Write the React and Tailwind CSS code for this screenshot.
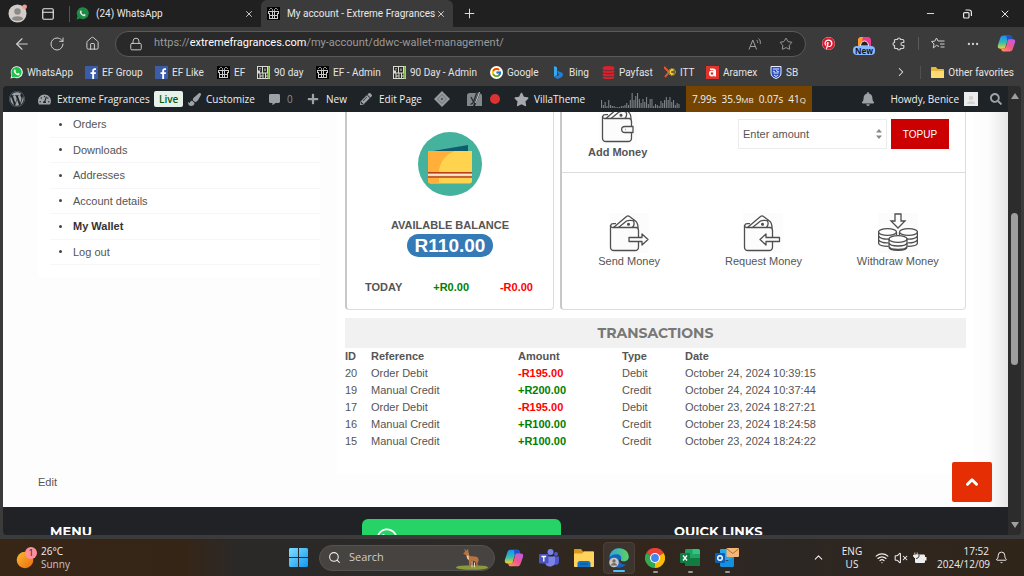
import {
  ArrowLeft, RotateCw, Home, Lock, Star, Plus, X, Minus, Ellipsis, ChevronRight, ChevronUp,
  Search, Wifi, VolumeX, Bell, PanelTop,
} from 'lucide-react'
import {
  FaWordpress, FaTachometerAlt, FaPaintBrush, FaCommentAlt, FaPencilAlt, FaStar, FaBell, FaSearch,
  FaWhatsapp, FaPinterest, FaPlus,
} from 'react-icons/fa'
import { FcGoogle } from 'react-icons/fc'
import clsx from 'clsx'

// ── Data ────────────────────────────────────────────────────────────────────
const FAVORITES = [
  { label: 'WhatsApp',       icon: WhatsAppIcon, width: 'w-[75px]' },
  { label: 'EF Group',       icon: FacebookIcon, width: 'w-[70px]' },
  { label: 'EF Like',        icon: FacebookIcon, width: 'w-[62px]' },
  { label: 'EF',             icon: GiftIcon,     width: 'w-[40px]' },
  { label: '90 day',         icon: NinetyIcon,   width: 'w-[59px]' },
  { label: 'EF - Admin',     icon: GiftIcon,     width: 'w-[77px]' },
  { label: '90 Day - Admin', icon: NinetyIcon,   width: 'w-[97px]' },
  { label: 'Google',         icon: GoogleIcon,   width: 'w-[62px]' },
  { label: 'Bing',           icon: BingIcon,     width: 'w-[50px]' },
  { label: 'Payfast',        icon: PayfastIcon,  width: 'w-[62px]' },
  { label: 'ITT',            icon: IttIcon,      width: 'w-[42px]' },
  { label: 'Aramex',         icon: AramexIcon,   width: 'w-[64px]' },
  { label: 'SB',             icon: ShieldIcon,   width: 'w-[40px]' },
]

const ACCOUNT_MENU = ['Orders', 'Downloads', 'Addresses', 'Account details', 'My Wallet', 'Log out']

const TRANSACTIONS = [
  { id: 20, reference: 'Order Debit',   amount: '-R195.00', type: 'Debit',  date: 'October 24, 2024 10:39:15' },
  { id: 19, reference: 'Manual Credit', amount: '+R200.00', type: 'Credit', date: 'October 24, 2024 10:37:44' },
  { id: 17, reference: 'Order Debit',   amount: '-R195.00', type: 'Debit',  date: 'October 23, 2024 18:27:21' },
  { id: 16, reference: 'Manual Credit', amount: '+R100.00', type: 'Credit', date: 'October 23, 2024 18:24:58' },
  { id: 15, reference: 'Manual Credit', amount: '+R100.00', type: 'Credit', date: 'October 23, 2024 18:24:22' },
]

const LOAD_BARS = [8, 3, 6, 2, 8, 3, 2, 2, 1, 1, 1, 2, 2, 3, 5, 3, 8, 15, 8, 12, 15, 9, 5, 9, 6, 11, 4, 9, 9, 2, 4, 3, 2, 7, 5, 8, 11, 8, 11, 6, 8, 3, 5, 4]

// ── Small brand icons ───────────────────────────────────────────────────────
function WhatsAppIcon() {
  return (
    <svg width="13" height="13" viewBox="0 0 26 26" className="shrink-0">
      <path d="M1 25l2-7A12 12 0 1 1 8 23z" fill="#fff" />
      <path d="M3 23l1.400-5A10.300 10.300 0 1 1 8.500 21.600z" fill="#1fc14b" />
      <path d="M8.500 7.500c1-1 2-.8 2.400.3l.8 2c.2.700-1 1.500-.7 2 1 1.700 2 2.700 3.700 3.400.7.300 1.200-1.200 2-1l2 1c1 .5.5 2-.4 2.800-1 .8-2.400.8-3.600.4-3.400-1.100-6-3.500-7-6.700-.4-1.500-.1-3.200.8-4.200z" fill="#fff" />
    </svg>
  )
}

// dimmed version used in the inactive tab
function WhatsAppTabIcon() {
  return (
    <svg width="13" height="13" viewBox="0 0 26 26" className="shrink-0">
      <path d="M1 25l2-7A12 12 0 1 1 8 23z" fill="#1d8a45" />
      <path d="M8.500 7.500c1-1 2-.8 2.400.3l.8 2c.2.700-1 1.500-.7 2 1 1.700 2 2.700 3.700 3.400.7.300 1.200-1.200 2-1l2 1c1 .5.5 2-.4 2.800-1 .8-2.400.8-3.600.4-3.400-1.100-6-3.500-7-6.700-.4-1.500-.1-3.200.8-4.200z" fill="#e5e5e5" />
    </svg>
  )
}

function FacebookIcon() {
  return (
    <svg width="13" height="13" viewBox="0 0 13 13" className="shrink-0">
      <rect width="13" height="13" fill="#3b5ca8" />
      <path d="M7.200 13V8H5.500V6.200h1.700V4.800C7.200 3 8.200 2.200 9.800 2.200h1.200v1.700h-.9c-.8 0-1 .4-1 1v1.300h1.900L10.800 8H9.100v5z" fill="#fff" />
    </svg>
  )
}

function GiftIcon() {
  return (
    <svg width="13" height="13" viewBox="0 0 13 13" className="shrink-0" shapeRendering="crispEdges">
      <rect width="13" height="13" fill="#050505" />
      <path d="M1 4h11v1H1zM2 8h9v1H2zM2 11h9v1H2zM1 4h1v3H1zM11 4h1v3h-1zM2 6h1v6H2zM10 6h1v6h-1zM5 4h1v8H5zM7 4h1v8H7z" fill="#c9c9c9" />
      <path d="M3 1h2v1H3zM8 1h2v1H8zM5 2h1v2H5zM7 2h1v2H7zM2 2h1v1H2zM10 2h1v1h-1z" fill="#8f8f8f" />
    </svg>
  )
}

function NinetyIcon() {
  return (
    <svg width="13" height="13" viewBox="0 0 26 26" className="shrink-0">
      <rect width="26" height="26" fill="#d9dad2" />
      <path d="M2 2h8v11H6v-3h1V9H2zM12 2h8v11h-8zM2 15h3v9H2zM7 15h4v4H7zM7 21h4v3H7zM13 15h3v9h-3zM18 15h3v4h-3zM18 21h3v3h-3z" fill="#2a2a28" />
      <path d="M5 4h2v3H5zM15 5h2v5h-2z" fill="#ddd" />
      <rect x="22" y="1" width="3" height="24" fill="#7cb342" />
    </svg>
  )
}

function GoogleIcon() {
  return (
    <span className="flex size-[13px] shrink-0 items-center justify-center rounded-full bg-white">
      <FcGoogle size={11} />
    </span>
  )
}

function BingIcon() {
  return (
    <svg width="13" height="13" viewBox="0 0 13 13" className="shrink-0">
      <path d="M2 0l3 1.200v8L2 11z" fill="#35a8f0" />
      <path d="M5 4.500l5.500 2.600c1 1.400.3 3.400-1 4.100L5.500 13 2 11l3-1 2.500-1.200-1-.6z" fill="#1f7fe0" />
    </svg>
  )
}

function PayfastIcon() {
  return (
    <svg width="13" height="13" viewBox="0 0 13 13" className="shrink-0" fill="none" stroke="#e01f2d" strokeWidth="2">
      <ellipse cx="6.500" cy="2.200" rx="5" ry="1.200" fill="#e01f2d" />
      <path d="M1 5c1.500 1.700 9.500 1.700 11 0M1 8c1.500 1.700 9.500 1.700 11 0M1 11c1.500 1.500 9.500 1.500 11 0" />
    </svg>
  )
}

function IttIcon() {
  return (
    <svg width="12" height="12" viewBox="0 0 12 12" className="shrink-0" fill="none">
      <path d="M0 1l5 5-4 5" stroke="#e8592b" strokeWidth="2" />
      <circle cx="8" cy="6" r="3.500" fill="#6b6330" stroke="#b39c4e" strokeDasharray="1.500 1" />
      <path d="M9.500 4.500a2 2 0 1 0 0 3" stroke="#ffcf2e" strokeWidth="1.500" />
    </svg>
  )
}

function AramexIcon() {
  return (
    <svg width="13" height="13" viewBox="0 0 13 13" className="shrink-0">
      <rect width="13" height="13" fill="#e0332c" />
      <circle cx="6" cy="7.500" r="2.200" fill="none" stroke="#fff" strokeWidth="1.700" />
      <path d="M4 2.500h3c2 0 3 1 3 2.500v5.500H8.300V5.500L7 4.100H4z" fill="#fff" />
    </svg>
  )
}

function ShieldIcon() {
  return (
    <svg width="12" height="13" viewBox="0 0 12 13" className="shrink-0">
      <path d="M1 .5h10V7c0 3-2 4.500-5 5.500-3-1-5-2.500-5-5.500z" fill="#2a4fc0" stroke="#e6ebff" />
      <path d="M3 3h6M3 5l2 1M6 4.500l3 1.500M3.500 7h5M4 9l2 1.500L8 9" stroke="#fff" strokeWidth=".9" fill="none" />
    </svg>
  )
}

function CopilotIcon({ className }) {
  return (
    <svg viewBox="0 0 24 24" className={className}>
      <defs>
        <linearGradient id="cp-a" x1="0" y1="0" x2="0" y2="1">
          <stop offset="0" stopColor="#1e8cf0" /><stop offset=".55" stopColor="#35bdb0" /><stop offset="1" stopColor="#f5d327" />
        </linearGradient>
        <linearGradient id="cp-b" x1="1" y1="0" x2="0" y2="1">
          <stop offset="0" stopColor="#b55cf5" /><stop offset=".5" stopColor="#f0588c" /><stop offset="1" stopColor="#ff9a4a" />
        </linearGradient>
      </defs>
      <path d="M8 2h8c1.500 0 2.300 1 2.700 2.300L19.500 7h-4c-1.500 0-2.300 1-2.700 2.300L10.500 17c-.5 1-1 1.500-2.500 1.500H4C1 18.500.5 16 1.300 13.500l3-9C5 3 6 2 8 2z" fill="url(#cp-a)" />
      <path d="M12 2h4c1.500 0 2.300 1 2.700 2.300L19.500 7h-4c-1.500 0-2.300 1-2.700 2.300z" fill="#1d52cf" />
      <path d="M16 22H8c-1.500 0-2.300-1-2.700-2.300L4.800 18h4c1.500 0 2.300-1 2.700-2.300L13.500 8c.5-1 1-1.500 2.500-1.500h4c3 0 3.500 2 2.700 4.500l-3 8.500C19 21 18 22 16 22z" fill="url(#cp-b)" />
    </svg>
  )
}

// ── Browser chrome ──────────────────────────────────────────────────────────
function TabBar() {
  return (
    <div className="flex h-[27px] shrink-0 items-center bg-[#202020] font-[Roboto,sans-serif] text-[10px] text-[#e8e8e8]">
      <svg viewBox="0 0 20 20" className="ml-2 size-[19px]">
        <circle cx="10" cy="10" r="9.500" fill="#cfccc9" />
        <circle cx="10" cy="8" r="3.400" fill="#8d8986" />
        <path d="M4 15.500c1-3.500 11-3.500 12 0-2.500 3-9.500 3-12 0z" fill="#8d8986" />
        <circle cx="17.500" cy="3" r="2.500" fill="#f59a94" />
      </svg>
      <PanelTop size={14} className="ml-[14px]" />
      <span className="ml-[14px] h-4 w-px bg-[#555]" />
      <a href="#whatsapp" className="ml-[6px] flex w-[178px] items-center">
        <WhatsAppTabIcon />
        <span className="ml-[7px] flex-1 whitespace-nowrap">(24) WhatsApp</span>
        <X size={10} className="shrink-0" />
      </a>
      <a href="#account" className="ml-[7px] flex h-full w-[192px] items-center rounded-t-md bg-[#3b3b3b] pr-[7px] pl-[6px]">
        <GiftIcon />
        <span className="ml-[7px] flex-1 whitespace-nowrap">My account - Extreme Fragrances</span>
        <X size={10} className="shrink-0" />
      </a>
      <button aria-label="New tab" className="ml-[9px]"><Plus size={15} strokeWidth={1.500} /></button>
      <div className="mr-[13px] ml-auto flex items-center gap-[27px]">
        <button aria-label="Minimize"><Minus size={11} /></button>
        <button aria-label="Restore">
          <svg width="9" height="10" viewBox="0 0 9 10" fill="none" stroke="currentColor" strokeWidth="1.200">
            <rect x=".6" y="3.600" width="5.400" height="5.400" rx="1" />
            <path d="M2.500 1h3.500c1.500 0 2.400 1 2.400 2.400V7" />
          </svg>
        </button>
        <button aria-label="Close"><X size={12} /></button>
      </div>
    </div>
  )
}

function Toolbar() {
  return (
    <div className="flex h-[33px] shrink-0 items-center bg-[#3b3b3b] text-[#d0d0d0]">
      <button aria-label="Back" className="ml-[13px]"><ArrowLeft size={18} strokeWidth={1.500} /></button>
      <button aria-label="Refresh" className="ml-[18px]"><RotateCw size={16} strokeWidth={1.500} /></button>
      <button aria-label="Home" className="ml-[20px]"><Home size={15} strokeWidth={1.600} /></button>
      <div className="ml-[15px] flex h-[26px] flex-1 items-center rounded-full border border-[#5a5a5a] bg-[#292929] pr-[12px] pl-[13px]">
        <Lock size={14} strokeWidth={1.600} />
        <p className="ml-[11px] flex-1 font-[Roboto,sans-serif] text-[11px] whitespace-nowrap text-[#9a9a9a]">
          https://<span className="text-white">extremefragrances.com</span>/my-account/ddwc-wallet-management/
        </p>
        <svg width="14" height="14" viewBox="0 0 14 14" fill="none" stroke="#a0a0a0">
          <path d="M1 12.500L4.800 3l3.800 9.500M2.400 9.500h4.800M8.500 3c1 .8 1.300 2 1 3M10.500 1.500c1.700 1.400 2.200 3.400 1.700 5.500" />
        </svg>
        <Star size={14} strokeWidth={1.500} className="ml-[17px] text-[#a8a8a8]" />
      </div>
      <div className="flex items-center">
        <span className="ml-[16px] rounded-full bg-white"><FaPinterest size={13} className="text-[#e0142b]" /></span>
        <span className="mt-1 ml-[19px] flex w-[20px] flex-col items-center">
          <svg width="13" height="9" viewBox="0 0 13 9">
            <path d="M0 9V2L2 0h9l2 2v7z" fill="#ee3b92" />
            <path d="M0 9V2L2 0h3L3 9z" fill="#ff9d1f" />
            <path d="M2.500 9a4 5 0 0 1 8 0z" fill="#222" stroke="#eee" />
          </svg>
          <span className="rounded bg-[#8ab8ff] px-[2px] text-[8px] leading-[9px] font-bold text-[#101820]">New</span>
        </span>
        <svg width="14" height="14" viewBox="0 0 14 14" fill="none" stroke="currentColor" strokeWidth="1.200" className="ml-[18px]">
          <path d="M3.500 2.500h2c0-2 3-2 3 0h2.300c.6 0 1 .4 1 1v2h-1.300c-2 0-2 3 0 3h1.300v2c0 .6-.4 1-1 1H8.500c0 2-3 2-3 0h-2c-.6 0-1-.4-1-1V8.500c-2 0-2-3 0-3v-2c0-.6.4-1 1-1z" />
        </svg>
        <span className="ml-[12px] h-[13px] w-px bg-[#5a5a5a]" />
        <svg width="14" height="14" viewBox="0 0 14 14" fill="none" stroke="currentColor" className="ml-[12px]">
          <path d="M8 9.500L5.500 8.300 2.300 11l.7-4-2.500-2.500 3.300-.4L5.500 1 7 4h6.500M9 7h4.500M9.500 10h4" />
        </svg>
        <Ellipsis size={14} className="ml-[21px]" />
        <CopilotIcon className="mr-[8px] ml-[17px] size-[19px]" />
      </div>
    </div>
  )
}

function FavoritesBar() {
  return (
    <nav className="flex h-[26px] shrink-0 items-center bg-[#3b3b3b] pb-[2px] pl-[10px] font-[Roboto,sans-serif] text-[10px] text-[#e4e4e4]">
      {FAVORITES.map(({ label, icon: Icon, width }) => (
        <a key={label} href="#fav" className={clsx('flex shrink-0 items-center gap-1 whitespace-nowrap', width)}>
          <Icon />
          {label}
        </a>
      ))}
      <button aria-label="More favorites" className="ml-auto"><ChevronRight size={14} strokeWidth={1.800} /></button>
      <span className="ml-[12px] h-[13px] w-px bg-[#505050]" />
      <a href="#other" className="mr-[10px] ml-[10px] flex items-center gap-1 whitespace-nowrap">
        <svg width="13" height="11" viewBox="0 0 13 11">
          <path d="M0 1c0-.6.400-1 1-1h4l1.500 2H12c.6 0 1 .4 1 1v7c0 .6-.4 1-1 1H1c-.6 0-1-.4-1-1z" fill="#e8b63c" />
          <path d="M0 4h13v6c0 .6-.4 1-1 1H1c-.6 0-1-.4-1-1z" fill="#ffdc70" />
        </svg>
        Other favorites
      </a>
    </nav>
  )
}

// ── WordPress admin bar ─────────────────────────────────────────────────────
function AdminBar() {
  return (
    <header className="flex h-[26px] shrink-0 items-center rounded-tl bg-[#1d2327] pl-[6px] text-[10px] whitespace-nowrap text-[#f0f0f1]">
      <a href="#wp" aria-label="WordPress" className="w-[29px]"><FaWordpress size={16} className="text-[#9ca2a7]" /></a>
      <a href="#site" className="flex w-[116px] items-center gap-[6px]">
        <FaTachometerAlt size={13} className="text-[#9ca2a7]" />Extreme Fragrances
      </a>
      <span className="w-[34px]">
        <span className="rounded-xs bg-[#e6f2e8] px-[5px] py-[1px] font-semibold text-[#005c12]">Live</span>
      </span>
      <a href="#customize" className="flex w-[81px] items-center gap-[5px]">
        <FaPaintBrush size={13} className="text-[#9ca2a7]" />Customize
      </a>
      <a href="#comments" className="flex w-[38px] items-center gap-[7px] text-[#8c9196]">
        <FaCommentAlt size={11} className="text-[#9ca2a7]" />0
      </a>
      <a href="#new" className="flex w-[53px] items-center gap-[7px]">
        <FaPlus size={12} className="text-[#9ca2a7]" />New
      </a>
      <a href="#edit" className="flex w-[74px] items-center gap-[7px]">
        <FaPencilAlt size={12} className="text-[#9ca2a7]" />Edit Page
      </a>
      <svg width="16" height="16" viewBox="0 0 16 16" className="shrink-0">
        <path d="M8 0l8 8-8 8-8-8z" fill="#969ba0" />
        <path d="M8 3.500L12.500 8 8 12.500 3.500 8z" fill="none" stroke="#6a7177" />
        <path d="M8 6.500L9.500 8 8 9.500 6.500 8z" fill="#4c545b" />
      </svg>
      <svg width="15" height="14" viewBox="0 0 15 14" className="ml-[17px] shrink-0">
        <path d="M2.500 1H11L6 14H0V3.500C0 2 1 1 2.500 1zM13 1.500c1.300.3 2 1.200 2 2.500v10H8z" fill="#82878c" />
        <path d="M4 5l2.500 5M10 0L6.500 10c-.5 1.500-1.200 2.300-3 2.300" fill="none" stroke="#2b3136" strokeWidth="1.400" />
        <path d="M12.500 0L8.500 11" stroke="#b6babd" strokeWidth="1.200" />
      </svg>
      <span className="ml-[8px] size-[10px] shrink-0 rounded-full bg-[#dc3232]" />
      <a href="#villa" className="ml-[14px] flex w-[87px] items-center gap-[5px]">
        <FaStar size={15} className="text-[#a7aaad]" />VillaTheme
      </a>
      <svg viewBox="0 0 79 16" className="mt-[2px] h-4 w-[79px] shrink-0" fill="#7b8085">
        {LOAD_BARS.map((h, i) => (
          <rect key={i} x={i * 1.800} y={16 - h} width="1.100" height={h} />
        ))}
      </svg>
      <span className="ml-[6px] flex h-full w-[126px] items-center justify-between bg-[#744400] px-[6px]">
        <span>7.99s</span><span>35.9<small className="text-[8px]">MB</small></span><span>0.07s</span><span>41<small className="text-[8px]">Q</small></span>
      </span>
      <FaBell size={14} className="ml-auto text-[#9ca2a7]" />
      <a href="#profile" className="ml-[15px] flex items-center gap-[5px]">
        Howdy, Benice
        <svg width="14" height="14" viewBox="0 0 14 14">
          <rect width="14" height="14" fill="#ececec" />
          <circle cx="7" cy="6" r="2.300" fill="#d4d4d4" />
          <path d="M3 12c0-4 8-4 8 0z" fill="#d4d4d4" />
        </svg>
      </a>
      <button aria-label="Search site" className="mr-[6px] ml-[12px]"><FaSearch size={12} className="text-[#9ca2a7]" /></button>
    </header>
  )
}

// ── Wallet drawings ─────────────────────────────────────────────────────────
function BalanceArt() {
  return (
    <svg width="64" height="64" viewBox="0 0 64 64">
      <circle cx="32" cy="32" r="32" fill="#45b29d" />
      <path d="M15 19l35-6v10H15z" fill="#105c6e" />
      <path d="M10 19h44v30c0 1.500-1 2.500-2.500 2.500h-39C11 51.500 10 50.500 10 49z" fill="#ffd34e" />
      <path d="M10 19h27C28 22 21 31 21 40v11.500h-8.500C11 51.500 10 50.500 10 49z" fill="#ffaf3a" />
      <path d="M10 40h44v6H10z" fill="#f5c787" />
      <path d="M10 40.800h44M10 45h44" stroke="#b3401f" strokeWidth="1.500" />
      <path d="M10 42.900h44" stroke="#fff0d8" strokeWidth="1.200" />
    </svg>
  )
}

function WalletArt({ size, children }) {
  return (
    <svg width={size} height={size} viewBox="0 0 40 40" fill="none" stroke="#4f4f4f" strokeWidth="1.300" strokeLinejoin="round" className="bg-[#fcfcfc]">
      <path d="M1.500 12v22c0 2.500 1 3.500 3.500 3.500h21c2.500 0 3.500-1 3.500-3.500V17.500c0-2-.8-3-2.500-3H3.500c-2.500 0-2.500-3.800 1-3.800H7" />
      <path d="M4.500 14.500L17.500 3.500c1-.9 2-.9 3 0l6 4.500c2 1.500 2.500 3.500 2.500 7M9.500 14.500l8-6.500c2-1 7-.5 7 0 1 2 1 4-1 6.500" />
      <circle cx="19.500" cy="11.300" r=".9" fill="#4f4f4f" />
      {children}
    </svg>
  )
}

function AddMoneyIcon() {
  return (
    <svg width="38" height="40" viewBox="0 0 38 40" fill="none" stroke="#4f4f4f" strokeWidth="1.300" strokeLinejoin="round" className="bg-[#fcfcfc]">
      <path d="M3.500 12v22c0 2.500 1 3.500 3.500 3.500h22c2.500 0 3.500-1 3.500-3.500V17.500c0-2-.8-3-2.500-3H5.500c-2.500 0-2.500-3.800 1-3.800H9" />
      <path d="M7 14.500L19.500 3.500c1-.9 2-.9 3 0l7 4.500c2 1.500 2.500 3.500 2.500 7M12 14.500l8-6.500c2-1 7-.5 7 0 1 2 1 4-1 6.500" />
      <circle cx="22" cy="11.300" r=".9" fill="#4f4f4f" />
      <path d="M34 22.500h-8c-4.500 0-4.500 6 0 6h8zM26 25.500h.5" fill="#fcfcfc" />
    </svg>
  )
}

function SendMoneyIcon() {
  return (
    <WalletArt size={40}>
      <path d="M20 24.500h13V21l6 5.500-6 5.500v-3.500H20z" fill="#fcfcfc" />
    </WalletArt>
  )
}

function RequestMoneyIcon() {
  return (
    <WalletArt size={40}>
      <path d="M36.500 24.500H23V21l-6 5.500 6 5.500v-3.500h13.500z" fill="#fcfcfc" />
    </WalletArt>
  )
}

function WithdrawMoneyIcon() {
  return (
    <svg width="40" height="40" viewBox="0 0 40 40" fill="none" stroke="#4f4f4f" strokeWidth="1.300" className="bg-[#fcfcfc]">
      <path d="M17 1h6v7h4l-7 7-7-7h4z" />
      <ellipse cx="9.500" cy="19" rx="9" ry="3.300" />
      <path d="M.6 19v11c0 2 4.500 3.300 10 3.300M18.500 19v3M.6 23c1 2.500 6 3.500 10.500 3M.6 26.800c1 2.500 6 3.500 10 3" />
      <ellipse cx="30.500" cy="19" rx="9" ry="3.300" />
      <path d="M39.400 19v11c0 2-4.500 3.300-10 3.300M21.500 19v3M39.400 23c-1 2.500-6 3.500-10.500 3M39.400 26.800c-1 2.500-6 3.500-10 3" />
      <ellipse cx="20" cy="26" rx="9" ry="3.300" fill="#fcfcfc" />
      <path d="M11 26v8c0 4.500 18 4.500 18 0v-8M11 30c1 4 17 4 18 0M11 33.500c1 4 17 4 18 0" />
    </svg>
  )
}

// ── Account page ────────────────────────────────────────────────────────────
function AccountMenu() {
  return (
    <aside className="w-[282px] shrink-0 self-start bg-white pb-3 pl-3">
      <ul className="grid h-[153px] auto-rows-fr">
        {ACCOUNT_MENU.map(item => (
          <li key={item} className="flex items-center border-b border-[#f7f7f7] pl-[9px]">
            <span className="mr-[11px] size-[3px] rounded-full bg-[#444]" />
            <a href="#menu" className={item === 'My Wallet' ? 'font-bold text-[#333]' : undefined}>{item}</a>
          </li>
        ))}
      </ul>
    </aside>
  )
}

function BalanceCard() {
  return (
    <section className="flex w-[209px] shrink-0 flex-col items-center rounded-b border border-t-0 border-l-2 border-[#dcdcdc] border-l-[#c8c8c8] pt-5 pb-[14px] font-bold">
      <BalanceArt />
      <h2 className="mt-[21px] leading-4">AVAILABLE BALANCE</h2>
      <p className="mt-px h-[23px] rounded-full bg-[#337ab7] px-2 text-[19px] leading-[23px] text-white">R110.00</p>
      <div className="mt-[22px] flex w-full justify-between pr-5 pl-[18px] leading-4">
        <span>TODAY</span>
        <span className="text-[#008000]">+R0.00</span>
        <span className="text-[#ff0000]">-R0.00</span>
      </div>
    </section>
  )
}

function ActionsCard() {
  return (
    <section className="flex flex-1 flex-col overflow-hidden rounded-b border border-t-0 border-l-2 border-[#dcdcdc] border-l-[#c8c8c8]">
      <form className="flex h-[61px] items-start overflow-hidden border-b border-[#dcdcdc] pr-4 pl-[26px]">
        <label htmlFor="amount" className="-mt-2 flex flex-col items-center leading-4 font-bold whitespace-nowrap">
          <AddMoneyIcon />
          Add Money
        </label>
        <div className="mt-[7px] ml-auto flex w-[149px] items-center border border-[#ececec] pr-1 pl-1">
          <input id="amount" placeholder="Enter amount" className="h-7 min-w-0 flex-1 outline-none placeholder:text-[#555]" />
          <svg width="6" height="12" viewBox="0 0 6 12" fill="#888">
            <path d="M0 4.500L3 1l3 3.500zM0 7.500L3 11l3-3.500z" />
          </svg>
        </div>
        <button type="button" className="mt-[7px] ml-[4px] h-[30px] w-[58px] bg-[#cc0000] text-[10px] text-white">TOPUP</button>
      </form>
      <div className="grid flex-1 grid-cols-3 pt-10 text-center leading-4">
        <a href="#send" className="flex flex-col items-center"><SendMoneyIcon />Send Money</a>
        <a href="#request" className="flex flex-col items-center"><RequestMoneyIcon />Request Money</a>
        <a href="#withdraw" className="flex flex-col items-center"><WithdrawMoneyIcon />Withdraw Money</a>
      </div>
    </section>
  )
}

function Transactions() {
  return (
    <section className="mt-2">
      <h2 className="bg-[#f1f1f1] text-center font-[Montserrat,Inter,sans-serif] text-[14px] leading-[30px] font-bold text-[#777]">TRANSACTIONS</h2>
      <table className="w-full table-fixed text-left leading-[17px]">
        <thead>
          <tr>
            <th className="w-[26px]">ID</th>
            <th className="w-[147px]">Reference</th>
            <th className="w-[104px]">Amount</th>
            <th className="w-[63px]">Type</th>
            <th>Date</th>
          </tr>
        </thead>
        <tbody>
          {TRANSACTIONS.map(t => (
            <tr key={t.id}>
              <td>{t.id}</td>
              <td>{t.reference}</td>
              <td className={clsx('font-bold', t.type === 'Debit' ? 'text-[#ff0000]' : 'text-[#008000]')}>{t.amount}</td>
              <td>{t.type}</td>
              <td>{t.date}</td>
            </tr>
          ))}
        </tbody>
      </table>
    </section>
  )
}

function SiteFooter() {
  return (
    <footer className="grid h-7 shrink-0 grid-cols-3 items-start overflow-hidden rounded-bl bg-[#202226] pr-[22px] pl-[47px] font-[Montserrat,Inter,sans-serif] text-[13px] leading-4 font-bold text-white">
      <h3 className="mt-4">MENU</h3>
      <a href="#chat" className="mt-3 flex h-10 w-[199px] items-start gap-[9px] rounded-md bg-[#25d366] pt-2 pl-[13px] text-[11px] leading-6 font-normal">
        <FaWhatsapp size={24} />
        Facebook and WhatsApp
      </a>
      <h3 className="mt-4">QUICK LINKS</h3>
    </footer>
  )
}

function Scrollbar() {
  return (
    <div className="flex w-[13px] shrink-0 flex-col items-center rounded-r bg-[#2c2c2c] py-[7px]">
      <svg width="8" height="6" viewBox="0 0 8 6"><path d="M4 0l4 6H0z" fill="#9f9f9f" /></svg>
      <div className="mt-[114px] h-[152px] w-[7px] rounded-full bg-[#9e9e9e]" />
      <svg width="8" height="6" viewBox="0 0 8 6" className="mt-auto"><path d="M4 6L0 0h8z" fill="#9f9f9f" /></svg>
    </div>
  )
}

// ── Windows taskbar ─────────────────────────────────────────────────────────
function DeerArt() {
  return (
    <svg width="32" height="22" viewBox="0 0 32 22" className="self-end">
      <ellipse cx="16" cy="19.500" rx="16" ry="2.300" fill="#8a9a3c" />
      <path d="M7 5.500L9 4l-.5-3.500L10.500 3 12 .5 12.500 4l1 4 5 .5c2.500 0 4 1 4 3v2l-1 1 .5 5H20.700l-.7-5-1.500-1.500-3.500-.3-.5 6.800h-1.200l-.5-7C11 11.500 10.500 9.500 10.500 7.500z" fill="#b9733f" />
      <path d="M10.500 7.500l.8 3 1.700 1.500-.5-4.500zM16.500 13v6.300h-1V13zM19 14.500v4.800h-1v-4.800z" fill="#ead3b8" />
    </svg>
  )
}

function Taskbar() {
  return (
    <footer className="flex h-[37px] shrink-0 items-center bg-[linear-gradient(to_right,#372616_0%,#352517_18%,#2b2927_23%,#2c2a27_45%,#33261b_62%,#2c2724_75%,#312519_100%)] text-[10px] whitespace-nowrap text-[#eee]">
      <div className="flex w-[289px] items-center pl-[16px] leading-[13px]">
        <svg width="22" height="22" viewBox="0 0 22 22">
          <defs>
            <linearGradient id="sun" x1="0" y1="0" x2="1" y2="1">
              <stop offset="0" stopColor="#f7bb2e" /><stop offset="1" stopColor="#ee6a12" />
            </linearGradient>
          </defs>
          <circle cx="9" cy="13" r="8.300" fill="url(#sun)" />
          <circle cx="15" cy="6" r="6" fill="#ff8f9c" />
          <text x="15" y="9" textAnchor="middle" fontSize="9" fill="#222">1</text>
        </svg>
        <p className="ml-[3px]">26°C<br /><span className="text-[#c9c4c0]">Sunny</span></p>
      </div>
      <svg width="19" height="19" viewBox="0 0 19 19">
        <defs>
          <linearGradient id="win" x1="0" y1="0" x2="1" y2="1">
            <stop offset="0" stopColor="#7fe0ff" /><stop offset="1" stopColor="#1296f0" />
          </linearGradient>
        </defs>
        <path d="M1 0h8v9H0V1zM10 0h8l1 1v8h-9zM0 10h9v9H1l-1-1zM10 10h9v8l-1 1h-8z" fill="url(#win)" />
      </svg>
      <label className="ml-[11px] flex h-[26px] w-[176px] items-center rounded-full border border-[#565250] bg-[#464340] pr-[6px] pl-[8px]">
        <Search size={13} />
        <input aria-label="Search" placeholder="Search" className="ml-[8px] min-w-0 flex-1 text-[11px] outline-none placeholder:text-[#d0cdca]" />
        <DeerArt />
      </label>
      <CopilotIcon className="ml-[9px] size-[20px]" />
      <svg width="20" height="18" viewBox="0 0 20 18" className="ml-[15px]">
        <circle cx="17" cy="5" r="2" fill="#5059c9" /><circle cx="11.500" cy="3" r="3" fill="#7b83eb" />
        <path d="M14 7.500h6V13c0 3-4 4-6 2z" fill="#5059c9" /><path d="M6 7.500h10V13c0 6-10 6-10 0z" fill="#7b83eb" />
        <rect y="5" width="9.500" height="9.500" rx="1" fill="#4b53bc" />
        <path d="M2.500 7.500h4.600M4.800 7.500V12.500" stroke="#fff" strokeWidth="1.300" />
      </svg>
      <svg width="20" height="18" viewBox="0 0 20 18" className="ml-[15px]">
        <path d="M0 1c0-.6.400-1 1-1h6l2 2.500h10c.6 0 1 .4 1 1V17H0z" fill="#d99a1b" />
        <path d="M0 4.500L8 4.500 10 2.500H19c.6 0 1 .4 1 1V17c0 .6-.4 1-1 1H1c-.6 0-1-.4-1-1z" fill="#ffd35c" />
        <path d="M3.500 18v-3.500c0-1.500 1-2.500 2.500-2.500h8c1.500 0 2.500 1 2.500 2.500V18z" fill="#1273c4" />
        <path d="M6 15h8" stroke="#0b4f91" />
      </svg>
      <span className="ml-[9px] flex h-8 w-8 flex-col items-center rounded border border-[#4a4039] bg-[#3d342d] pt-[5px]">
        <svg width="20" height="20" viewBox="0 0 20 20">
          <defs>
            <linearGradient id="edge" x1="0" y1="0" x2="1" y2="0">
              <stop offset="0" stopColor="#2aa7e0" /><stop offset="1" stopColor="#5fd35a" />
            </linearGradient>
          </defs>
          <circle cx="10" cy="10" r="9.700" fill="#1565c0" />
          <path d="M.5 9C1 3.500 5.500.3 10 .3c6 0 9.700 4 9.700 8.200 0 3.500-2.700 5-5.200 5-2 0-3-.8-2.500-1.800C13.500 8 10 6 7 6.300 4 6.500 1.500 8 .5 9z" fill="url(#edge)" />
          <path d="M12 11.500c-.5 1 .5 2 2.500 2 2 0 3.800-.6 4.800-2l.7 3-3 2c-3 0-7-1-7-5z" fill="#3d342d" />
          <circle cx="5" cy="14.500" r="4.800" fill="#c9c6c3" />
          <circle cx="5" cy="13" r="1.700" fill="#706c69" /><path d="M2 17.500c0-3.500 6-3.500 6 0z" fill="#706c69" />
        </svg>
        <span className="mt-[2px] h-[2px] w-3 shrink-0 rounded bg-[#4cc2ff]" />
      </span>
      <TaskIcon className="ml-[10px]">
        <path d="M10 10L1.300 5A10 10 0 0 1 18.700 5z" fill="#ea4335" />
        <path d="M10 10L18.700 5A10 10 0 0 1 10 20z" fill="#fbbc05" />
        <path d="M10 10v10A10 10 0 0 1 1.300 5z" fill="#34a853" />
        <circle cx="10" cy="10" r="5" fill="#fff" /><circle cx="10" cy="10" r="3.900" fill="#4285f4" />
      </TaskIcon>
      <TaskIcon className="ml-[15px]">
        <rect x="5" y="1" width="15" height="17" rx="1.500" fill="#21a366" />
        <path d="M12.500 1H18.500L20 2.500V6h-7.500z" fill="#33c481" /><path d="M5 10h15v6.500L18.500 18H6.500L5 16.500z" fill="#107c41" />
        <rect y="5" width="10" height="10" rx="1" fill="#107c41" />
        <path d="M3 7.500l4 5M7 7.500l-4 5" stroke="#fff" strokeWidth="1.300" />
      </TaskIcon>
      <TaskIcon className="ml-[15px]" wide>
        <rect x="5" y="1" width="14" height="11" rx="1" fill="#28a8ea" />
        <path d="M5 9l7 4 7-4v8.500c0 .8-.7 1.500-1.500 1.500h-11C5.700 19 5 18.300 5 17.500z" fill="#1490df" />
        <rect y="5" width="10" height="10" rx="1" fill="#0a62b8" />
        <circle cx="5" cy="10" r="2.300" fill="none" stroke="#fff" strokeWidth="1.400" />
        <rect x="11.500" y="0" width="12.500" height="9" rx="1" fill="#f3b878" />
        <path d="M12 1l5.800 4.500L23.500 1" fill="none" stroke="#b36b26" />
      </TaskIcon>
      <div className="mr-[16px] ml-auto flex items-center">
        <ChevronUp size={13} />
        <p className="ml-[15px] w-[24px] text-center leading-[13px]">ENG<br />US</p>
        <Wifi size={14} className="ml-[11px]" />
        <VolumeX size={14} strokeWidth={1.800} className="ml-[5px]" />
        <svg width="14" height="12" viewBox="0 0 14 12" className="ml-[5px]">
          <path d="M2 4c0-1 .5-1.500 1.500-1.500h7c1 0 1.500.5 1.500 1.500v1h1.500v3.500H12v1c0 1-.5 1.500-1.500 1.500h-7C2.500 11 2 10.500 2 9.500z" fill="#eee" />
          <path d="M1.800.5v2M4.200.5v2M.5 3h5v1c0 2.500-5 2.500-5 0z" fill="#eee" stroke="#eee" strokeWidth=".8" />
          <path d="M6 2.500V4c0 1.500-1.500 2.500-3 2.500" fill="none" stroke="#2d2622" strokeWidth=".9" />
        </svg>
        <p className="ml-[10px] w-[52px] text-right leading-[13px]">17:52<br />2024/12/09</p>
        <Bell size={13} strokeWidth={1.800} className="ml-[6px]" />
      </div>
    </footer>
  )
}

function TaskIcon({ className, wide, children }) {
  return (
    <span className={clsx('flex flex-col items-center pt-[5px]', className)}>
      <svg width={wide ? 24 : 20} height="20" viewBox={wide ? '0 0 24 20' : '0 0 20 20'}>{children}</svg>
      <span className="mt-[3px] h-[2px] w-[5px] rounded bg-[#9c9792]" />
    </span>
  )
}

export default function App() {
  return (
    <div className="flex h-screen flex-col overflow-hidden bg-[#3b3b3b] font-['Open_Sans','Noto_Sans',sans-serif]">
      <TabBar />
      <Toolbar />
      <FavoritesBar />
      <div className="mb-1 flex min-h-0 flex-1 overflow-hidden pr-[3px] pl-[3px]">
        <div className="flex min-w-0 flex-1 flex-col">
          <AdminBar />
          <div className="relative min-h-0 flex-1 overflow-hidden bg-[linear-gradient(to_right,#fdfdfd_98%,#e6e6e6)] pr-[34px] pl-[35px] font-['Liberation_Sans',Arial,sans-serif] text-[11px] text-[#555]">
            <div className="flex justify-between gap-[17px]">
              <AccountMenu />
              <main className="min-w-0 flex-1 bg-white px-2 pb-6">
                <div className="flex gap-[6px]">
                  <BalanceCard />
                  <ActionsCard />
                </div>
                <Transactions />
              </main>
            </div>
            <a href="#edit-page" className="block w-fit leading-4">Edit</a>
            <button aria-label="Back to top" className="absolute right-4 bottom-[5px] flex size-10 items-center justify-center rounded-xs bg-[#e62e04] text-white">
              <ChevronUp size={18} strokeWidth={4} />
            </button>
          </div>
          <SiteFooter />
        </div>
        <Scrollbar />
      </div>
      <Taskbar />
    </div>
  )
}
